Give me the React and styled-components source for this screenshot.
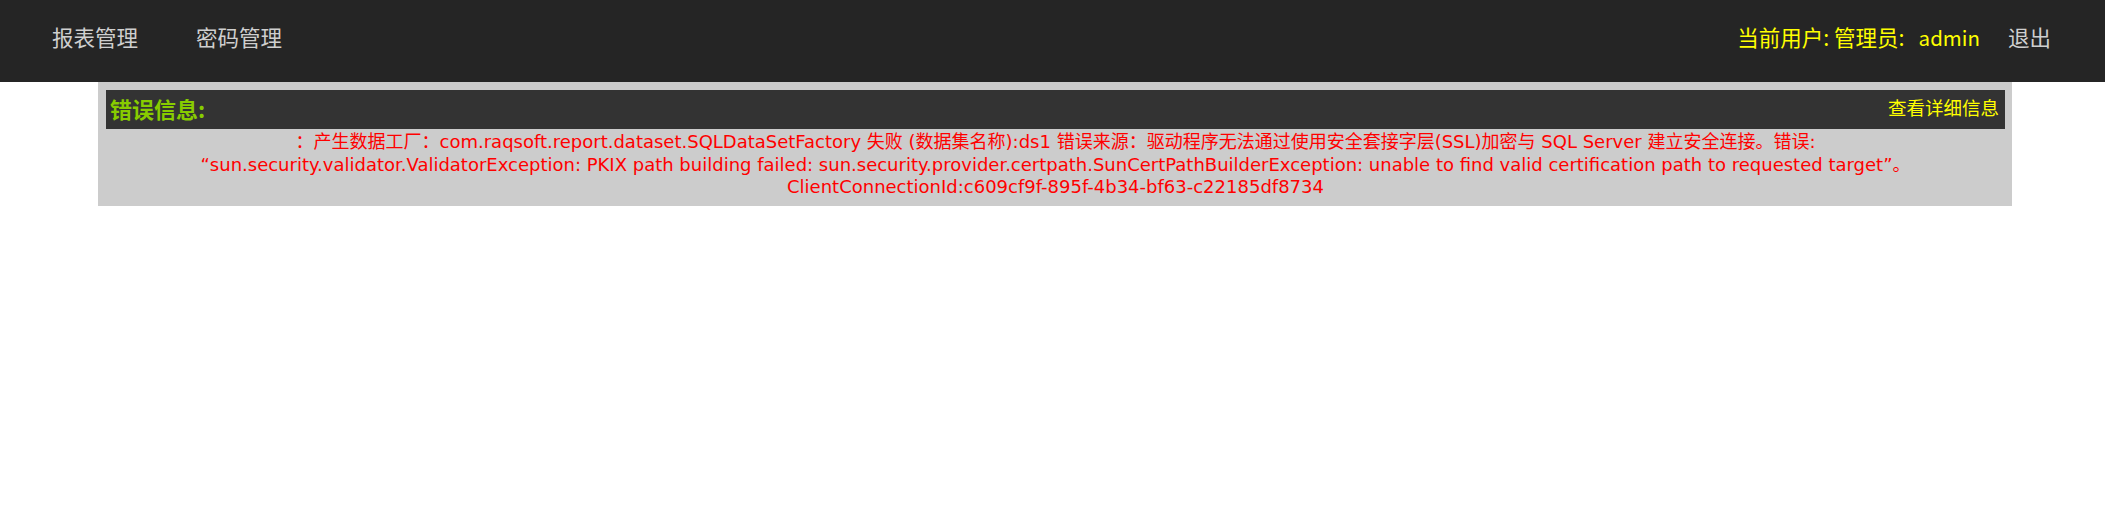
import React from "react";
import styled, { createGlobalStyle } from "styled-components";

const Global = createGlobalStyle`
  html, body { margin: 0; padding: 0; background: #ffffff; }
  body { font-family: "Noto Sans CJK SC", "Noto Sans", sans-serif; }
`;

const Header = styled.header`
  height: 82px;
  background: #252525;
  display: flex;
  align-items: center;
  justify-content: space-between;
  padding: 0 54px 9px 52px;
  box-sizing: border-box;
  font-family: "Noto Sans CJK SC", sans-serif;
  font-size: 21.5px;
`;

const Nav = styled.nav`
  display: flex;
  gap: 58px;
`;

const NavLink = styled.a`
  color: #cfcfcf;
  text-decoration: none;
  cursor: pointer;
`;

const UserBox = styled.div`
  display: flex;
  align-items: center;
`;

const UserLabel = styled.span`
  color: #ffff00;
`;

const UserName = styled.span`
  color: #ffff00;
  margin-left: 14px;
  margin-right: 28px;
  font-size: 20.5px;
`;

const Panel = styled.section`
  margin: 0 93px 0 98px;
  background: #cccccc;
  padding: 8px 7px 7px 8px;
`;

const TitleBar = styled.div`
  height: 39px;
  background: #333333;
  display: flex;
  align-items: center;
  justify-content: space-between;
  padding: 0 6px 0 4px;
  box-sizing: border-box;
`;

const Title = styled.span`
  color: #88cc00;
  font-weight: bold;
  font-size: 22px;
  font-family: "Noto Sans CJK SC", sans-serif;
  margin-top: -3px;
`;

const DetailLink = styled.a`
  color: #ffff00;
  font-size: 18.5px;
  font-family: "Noto Sans CJK SC", sans-serif;
  margin-top: -5px;
  cursor: pointer;
`;

const Message = styled.p`
  margin: 2px 0 0;
  color: #ff0000;
  text-align: center;
  font-family: "DejaVu Sans", "Noto Sans CJK SC", sans-serif;
  font-size: 18px;
  line-height: 22.5px;
`;

export default function App() {
  return (
    <>
      <Global />
      <Header>
        <Nav>
          <NavLink>报表管理</NavLink>
          <NavLink>密码管理</NavLink>
        </Nav>
        <UserBox>
          <UserLabel>当前用户: 管理员:</UserLabel>
          <UserName>admin</UserName>
          <NavLink>退出</NavLink>
        </UserBox>
      </Header>
      <Panel>
        <TitleBar>
          <Title>错误信息:</Title>
          <DetailLink>查看详细信息</DetailLink>
        </TitleBar>
        <Message>
          ：产生数据工厂：com.raqsoft.report.dataset.SQLDataSetFactory 失败 (数据集名称):ds1 错误来源：驱动程序无法通过使用安全套接字层(SSL)加密与 SQL Server 建立安全连接。错误:
          <br />
          “sun.security.validator.ValidatorException: PKIX path building failed: sun.security.provider.certpath.SunCertPathBuilderException: unable to find valid certification path to requested target”。
          <br />
          ClientConnectionId:c609cf9f-895f-4b34-bf63-c22185df8734
        </Message>
      </Panel>
    </>
  );
}
